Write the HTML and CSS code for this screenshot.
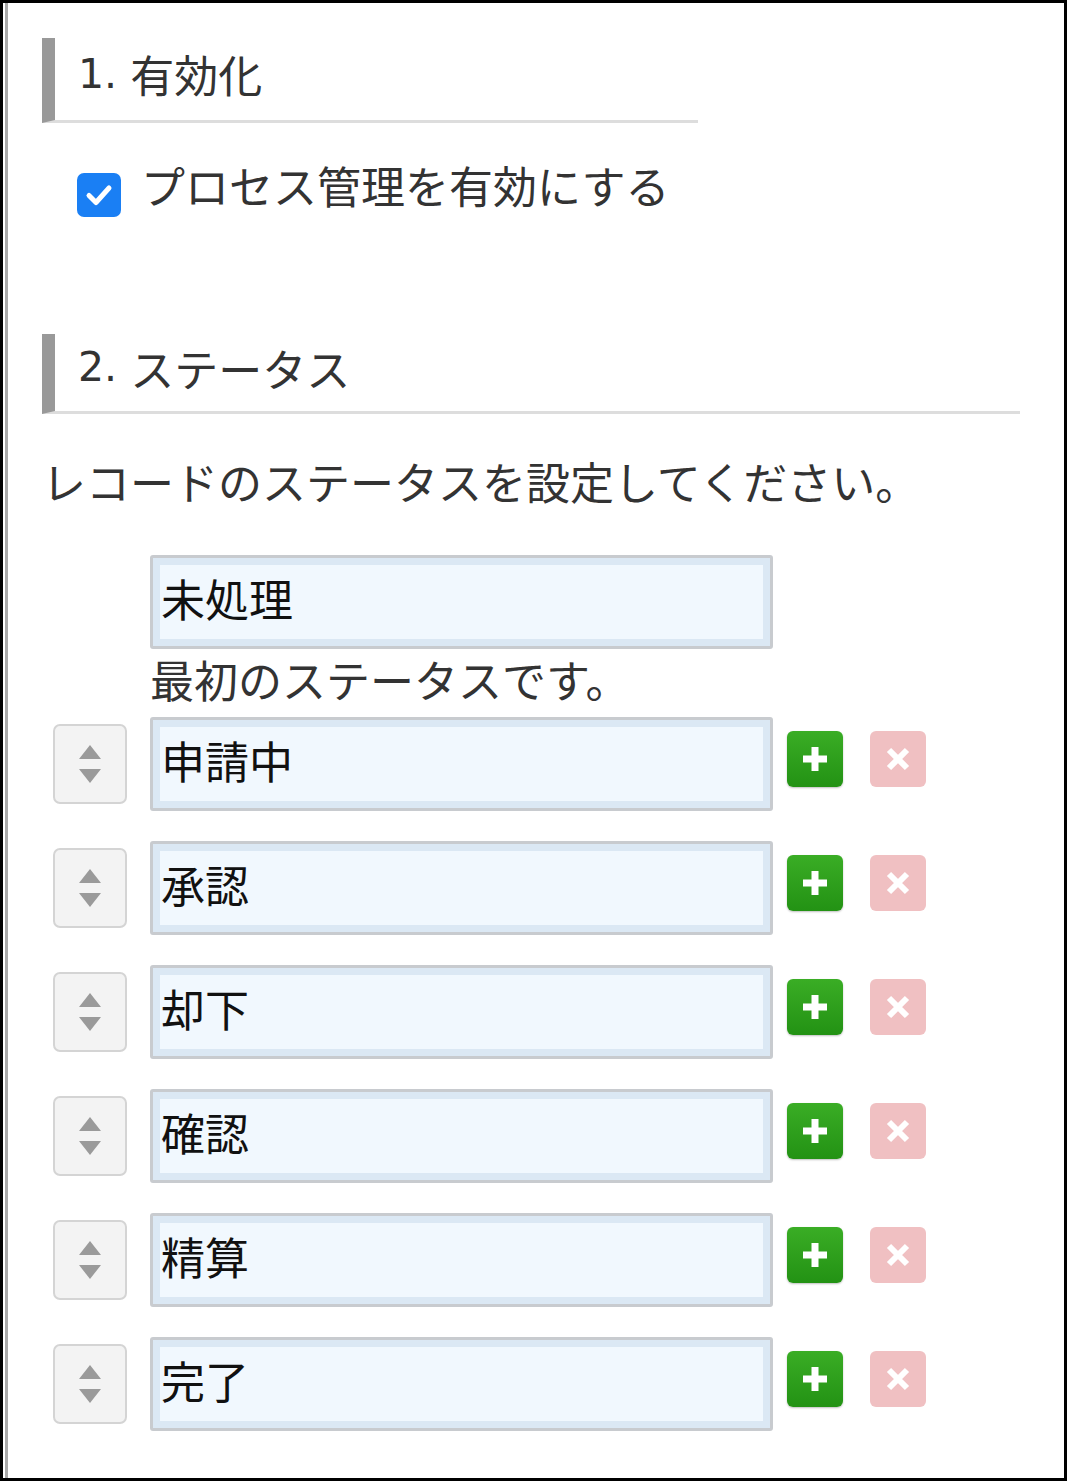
FILE: index.html
```html
<!DOCTYPE html>
<html lang="ja">
<head>
<meta charset="utf-8">
<link rel="stylesheet" href="styles.css">
</head>
<body>
<div class="frame">
  <div class="inner">
    <div class="heading heading-1"><span class="num">1. </span>有効化</div>
    <label class="check-row">
      <span class="checkbox">
        <svg width="30" height="30" viewBox="0 0 30 30"><path d="M5 15.5 L12 22.5 L25 8" fill="none" stroke="#fff" stroke-width="5" stroke-linecap="round" stroke-linejoin="round"/></svg>
      </span>
      <span class="check-label">プロセス管理を有効にする</span>
    </label>

    <div class="heading heading-2"><span class="num">2. </span>ステータス</div>
    <p class="desc">レコードのステータスを設定してください。</p>

    <div class="first">
      <div class="field"><span>未処理</span></div>
      <div class="note">最初のステータスです。</div>
    </div>

    <div class="rows">
      <div class="row">
        <div class="sort"><span class="up"></span><span class="down"></span></div>
        <div class="field"><span>申請中</span></div>
        <div class="btn add"><svg width="30" height="30" viewBox="0 0 30 30"><path d="M15 3V27M3 15H27" stroke="#fff" stroke-width="7"/></svg></div>
        <div class="btn del"><svg width="26" height="26" viewBox="0 0 26 26"><path d="M4 4L22 22M22 4L4 22" stroke="#fff" stroke-width="6"/></svg></div>
      </div>
      <div class="row">
        <div class="sort"><span class="up"></span><span class="down"></span></div>
        <div class="field"><span>承認</span></div>
        <div class="btn add"><svg width="30" height="30" viewBox="0 0 30 30"><path d="M15 3V27M3 15H27" stroke="#fff" stroke-width="7"/></svg></div>
        <div class="btn del"><svg width="26" height="26" viewBox="0 0 26 26"><path d="M4 4L22 22M22 4L4 22" stroke="#fff" stroke-width="6"/></svg></div>
      </div>
      <div class="row">
        <div class="sort"><span class="up"></span><span class="down"></span></div>
        <div class="field"><span>却下</span></div>
        <div class="btn add"><svg width="30" height="30" viewBox="0 0 30 30"><path d="M15 3V27M3 15H27" stroke="#fff" stroke-width="7"/></svg></div>
        <div class="btn del"><svg width="26" height="26" viewBox="0 0 26 26"><path d="M4 4L22 22M22 4L4 22" stroke="#fff" stroke-width="6"/></svg></div>
      </div>
      <div class="row">
        <div class="sort"><span class="up"></span><span class="down"></span></div>
        <div class="field"><span>確認</span></div>
        <div class="btn add"><svg width="30" height="30" viewBox="0 0 30 30"><path d="M15 3V27M3 15H27" stroke="#fff" stroke-width="7"/></svg></div>
        <div class="btn del"><svg width="26" height="26" viewBox="0 0 26 26"><path d="M4 4L22 22M22 4L4 22" stroke="#fff" stroke-width="6"/></svg></div>
      </div>
      <div class="row">
        <div class="sort"><span class="up"></span><span class="down"></span></div>
        <div class="field"><span>精算</span></div>
        <div class="btn add"><svg width="30" height="30" viewBox="0 0 30 30"><path d="M15 3V27M3 15H27" stroke="#fff" stroke-width="7"/></svg></div>
        <div class="btn del"><svg width="26" height="26" viewBox="0 0 26 26"><path d="M4 4L22 22M22 4L4 22" stroke="#fff" stroke-width="6"/></svg></div>
      </div>
      <div class="row">
        <div class="sort"><span class="up"></span><span class="down"></span></div>
        <div class="field"><span>完了</span></div>
        <div class="btn add"><svg width="30" height="30" viewBox="0 0 30 30"><path d="M15 3V27M3 15H27" stroke="#fff" stroke-width="7"/></svg></div>
        <div class="btn del"><svg width="26" height="26" viewBox="0 0 26 26"><path d="M4 4L22 22M22 4L4 22" stroke="#fff" stroke-width="6"/></svg></div>
      </div>
    </div>
  </div>
</div>
</body>
</html>
```

FILE: styles.css
```css
* { box-sizing: border-box; }
html, body { margin: 0; padding: 0; background: #fff; }
body {
  font-family: "Noto Sans CJK JP", "Noto Sans", sans-serif;
  color: #333;
  font-size: 44px;
}
.frame {
  width: 1067px;
  height: 1481px;
  border: 3px solid #000;
  padding-left: 2px;
  overflow: hidden;
}
.inner {
  height: 100%;
  border-left: 3px solid #a9a9a9;
  padding: 35px 0 0 34px;
}
.heading {
  display: flex;
  align-items: center;
  border-left: 13px solid #999;
  border-bottom: 3px solid #ddd;
  padding-left: 23px;
  font-size: 44px;
  color: #333;
  line-height: 1;
  white-space: pre;
}
.num {
  font-family: "DejaVu Sans", "Noto Sans CJK JP", sans-serif;
  font-size: 41px;
}
.heading-1 { width: 656px; height: 85px; padding-bottom: 10px; }
.heading-2 { width: 978px; height: 80px; margin-top: 115px; padding-bottom: 10px; }
.check-row {
  display: flex;
  align-items: center;
  margin-top: 36px;
  height: 60px;
  padding-left: 35px;
}
.checkbox {
  width: 44px;
  height: 44px;
  border-radius: 7px;
  background: #1a7ff4;
  display: flex;
  align-items: center;
  justify-content: center;
  margin-top: 12px;
}
.check-label {
  margin-left: 20px;
  line-height: 60px;
  margin-top: -8px;
}
.desc {
  margin: 37px 0 0 0;
  line-height: 60px;
  height: 60px;
}
.first {
  margin-top: 44px;
  padding-left: 108px;
}
.field {
  width: 623px;
  height: 94px;
  border: 3px solid #c8cbcf;
  border-radius: 3px;
  background: #f1f8fe;
  box-shadow: inset 0 0 0 7px #dbe8f4;
  display: flex;
  align-items: center;
  padding-left: 8px;
  padding-bottom: 8px;
  color: #111;
  line-height: 1;
}
.note {
  margin-top: 5px;
  height: 50px;
  line-height: 50px;
}
.rows {
  margin-top: 13px;
  display: flex;
  flex-direction: column;
  gap: 30px;
}
.row {
  display: flex;
  align-items: center;
  padding-left: 11px;
}
.sort {
  width: 74px;
  height: 80px;
  border: 2px solid #d4d4d4;
  border-radius: 7px;
  background: #f3f3f3;
  display: flex;
  flex-direction: column;
  align-items: center;
  justify-content: center;
  gap: 10px;
  margin-right: 23px;
}
.up, .down {
  width: 0;
  height: 0;
  border-left: 11px solid transparent;
  border-right: 11px solid transparent;
}
.up { border-bottom: 14px solid #9a9a9a; }
.down { border-top: 14px solid #9a9a9a; }
.btn {
  width: 56px;
  height: 56px;
  border-radius: 6px;
  display: flex;
  align-items: center;
  justify-content: center;
}
.add {
  margin-left: 14px;
  background: linear-gradient(#3aad25, #239214);
  box-shadow: 0 1px 2px rgba(0,0,0,0.25);
  margin-top: -10px;
}
.del {
  margin-left: 27px;
  background: #f0c0c2;
  margin-top: -10px;
}
```
